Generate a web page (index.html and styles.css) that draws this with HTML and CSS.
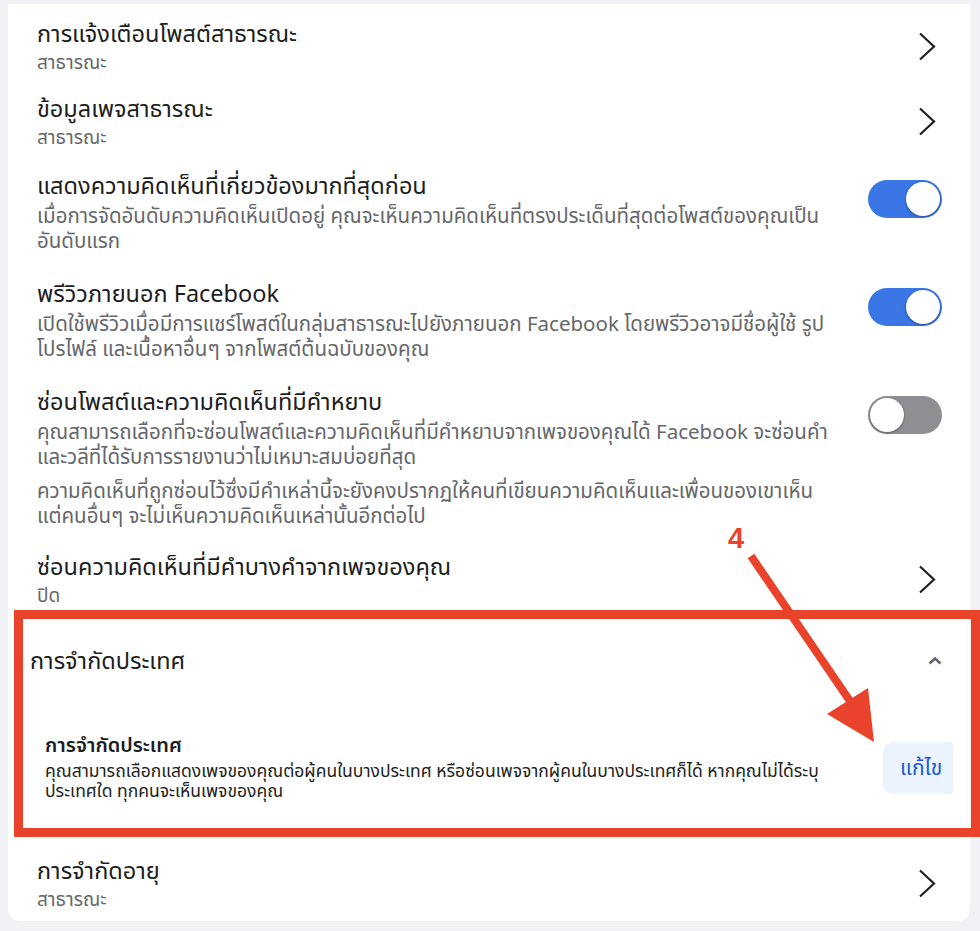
FILE: index.html
```html
<!DOCTYPE html>
<html lang="th">
<head>
  <meta charset="UTF-8">
  <meta name="viewport" content="width=device-width, initial-scale=1.0">
  <title>การตั้งค่าเพจ</title>
  <link rel="stylesheet" href="styles.css">
</head>
<body>
  <div class="page">
    <div class="card">
      <div class="row">
        <div class="text">
          <div class="title">การแจ้งเตือนโพสต์สาธารณะ</div>
          <div class="sub">สาธารณะ</div>
        </div>
        <svg class="chev" viewBox="0 0 24 30"><path d="M2 1.5 L16 14.5 L2 27.5"/></svg>
      </div>

      <div class="row">
        <div class="text">
          <div class="title">ข้อมูลเพจสาธารณะ</div>
          <div class="sub">สาธารณะ</div>
        </div>
        <svg class="chev" viewBox="0 0 24 30"><path d="M2 1.5 L16 14.5 L2 27.5"/></svg>
      </div>

      <div class="row toggle-row">
        <div class="text">
          <div class="title">แสดงความคิดเห็นที่เกี่ยวข้องมากที่สุดก่อน</div>
          <div class="desc">เมื่อการจัดอันดับความคิดเห็นเปิดอยู่ คุณจะเห็นความคิดเห็นที่ตรงประเด็นที่สุดต่อโพสต์ของคุณเป็นอันดับแรก</div>
        </div>
        <div class="switch on"><span class="knob"></span></div>
      </div>

      <div class="row toggle-row">
        <div class="text">
          <div class="title">พรีวิวภายนอก Facebook</div>
          <div class="desc">เปิดใช้พรีวิวเมื่อมีการแชร์โพสต์ในกลุ่มสาธารณะไปยังภายนอก Facebook โดยพรีวิวอาจมีชื่อผู้ใช้ รูปโปรไฟล์ และเนื้อหาอื่นๆ จากโพสต์ต้นฉบับของคุณ</div>
        </div>
        <div class="switch on"><span class="knob"></span></div>
      </div>

      <div class="row toggle-row">
        <div class="text">
          <div class="title">ซ่อนโพสต์และความคิดเห็นที่มีคำหยาบ</div>
          <div class="desc">คุณสามารถเลือกที่จะซ่อนโพสต์และความคิดเห็นที่มีคำหยาบจากเพจของคุณได้ Facebook จะซ่อนคำและวลีที่ได้รับการรายงานว่าไม่เหมาะสมบ่อยที่สุด</div>
          <div class="desc para">ความคิดเห็นที่ถูกซ่อนไว้ซึ่งมีคำเหล่านี้จะยังคงปรากฏให้คนที่เขียนความคิดเห็นและเพื่อนของเขาเห็น<span class="keep">แต่คนอื่นๆ</span> จะไม่เห็นความคิดเห็นเหล่านั้นอีกต่อไป</div>
        </div>
        <div class="switch"><span class="knob"></span></div>
      </div>

      <div class="row">
        <div class="text">
          <div class="title">ซ่อนความคิดเห็นที่มีคำบางคำจากเพจของคุณ</div>
          <div class="sub">ปิด</div>
        </div>
        <svg class="chev" viewBox="0 0 24 30"><path d="M2 1.5 L16 14.5 L2 27.5"/></svg>
      </div>

      <div class="section">
        <div class="section-head">
          <span>การจำกัดประเทศ</span>
          <svg class="chev-up" viewBox="0 0 14 10"><path d="M1.5 7.5 L7 2.5 L12.5 7.5"/></svg>
        </div>
        <div class="sub-item">
          <div class="text">
            <div class="item-title">การจำกัดประเทศ</div>
            <div class="item-desc">คุณสามารถเลือกแสดงเพจของคุณต่อผู้คนในบางประเทศ หรือซ่อนเพจจากผู้คนในบางประเทศก็ได้ หากคุณไม่ได้ระบุประเทศใด ทุกคนจะเห็นเพจของคุณ</div>
          </div>
          <button class="edit">แก้ไข</button>
        </div>
      </div>

      <div class="row">
        <div class="text">
          <div class="title">การจำกัดอายุ</div>
          <div class="sub">สาธารณะ</div>
        </div>
        <svg class="chev" viewBox="0 0 24 30"><path d="M2 1.5 L16 14.5 L2 27.5"/></svg>
      </div>
    </div>

    <!-- คำอธิบายประกอบ: กรอบสีแดงและลูกศร -->
    <div class="highlight"></div>
    <svg class="pointer" viewBox="0 0 200 260">
      <text x="28" y="48" class="step">4</text>
      <line x1="51" y1="56" x2="152" y2="204"/>
      <polygon points="174,242 127,214 168,188"/>
    </svg>
  </div>
</body>
</html>
```

FILE: styles.css
```css
body {
  margin: 0;
  background: #f0f2f5;
  font-family: "Noto Sans Thai", "Noto Sans", "Liberation Sans", sans-serif;
  color: #1c1e21;
}
.page {
  position: relative;
  width: 980px;
  height: 931px;
  overflow: hidden;
}
.card {
  margin: 4px 0 0 8px;
  width: 962px;
  background: #fff;
  border-radius: 0 0 12px 12px;
  padding-top: 5px;
}
.row {
  display: flex;
  align-items: center;
  gap: 20px;
  padding: 9px 28px 8px 29px;
}
.toggle-row {
  align-items: flex-start;
  padding: 11px 28px 13px 29px;
}
.text {
  flex: 1;
  min-width: 0;
}
.title {
  font-size: 23.5px;
  line-height: 34px;
}
.sub {
  font-size: 19px;
  line-height: 24px;
  color: #65676b;
}
.desc {
  font-size: 20.5px;
  line-height: 25px;
  color: #65676b;
  padding-right: 4px;
}
.desc.para {
  margin-top: 9px;
}
.keep {
  white-space: nowrap;
}
.chev {
  width: 24px;
  height: 30px;
  flex: none;
}
.chev path {
  fill: none;
  stroke: #1c1e21;
  stroke-width: 2.2;
}
.switch {
  flex: none;
  width: 74px;
  height: 38px;
  margin-top: 10px;
  border-radius: 19px;
  background: #8e8e93;
  position: relative;
}
.switch.on {
  background: #3a76e6;
}
.knob {
  position: absolute;
  top: 2px;
  left: 2px;
  width: 34px;
  height: 34px;
  border-radius: 50%;
  background: #fff;
  box-shadow: 0 1px 3px rgba(0, 0, 0, 0.35);
}
.switch.on .knob {
  left: 38px;
}
.section {
  padding: 28px 28px 44px 22px;
}
.section-head {
  display: flex;
  justify-content: space-between;
  align-items: center;
  font-size: 23.5px;
  line-height: 34px;
}
.chev-up {
  width: 14px;
  height: 10px;
  margin-top: -3px;
}
.chev-up path {
  fill: none;
  stroke: #606770;
  stroke-width: 2.6;
}
.sub-item {
  display: flex;
  align-items: center;
  gap: 30px;
  margin: 55px -11px 0 15px;
}
.item-title {
  font-size: 20px;
  line-height: 24px;
  font-weight: 600;
}
.item-desc {
  font-size: 17.5px;
  line-height: 20px;
  margin-top: 4px;
}
.edit {
  flex: none;
  width: 70px;
  height: 52px;
  border: none;
  border-radius: 10px 0 0 10px;
  background: #ebf3fe;
  color: #1d5ad6;
  font-family: inherit;
  font-size: 21px;
  text-align: left;
  padding: 0 0 0 17px;
}
.highlight {
  position: absolute;
  left: 14px;
  top: 610px;
  width: 966px;
  height: 227px;
  box-sizing: border-box;
  border: 9px solid #e9432b;
}
.pointer {
  position: absolute;
  left: 700px;
  top: 500px;
  width: 200px;
  height: 260px;
}
.pointer line {
  stroke: #e9432b;
  stroke-width: 8;
}
.pointer polygon {
  fill: #e9432b;
}
.step {
  fill: #e9432b;
  font-family: "Liberation Sans", sans-serif;
  font-weight: 700;
  font-size: 29px;
}
```
